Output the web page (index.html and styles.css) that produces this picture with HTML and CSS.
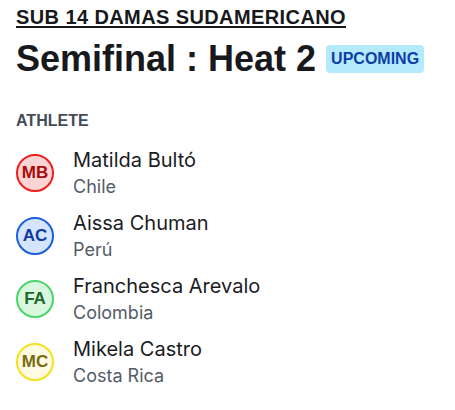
FILE: index.html
```html
<!DOCTYPE html>
<html lang="es">
<head>
<meta charset="utf-8">
<title>Semifinal : Heat 2</title>
<link rel="stylesheet" href="styles.css">
</head>
<body>
<main class="heat">
  <header class="heat-header">
    <a class="event" href="#">SUB 14 DAMAS SUDAMERICANO</a>
    <div class="title-row">
      <h1 class="title">Semifinal : Heat 2</h1>
      <span class="badge">UPCOMING</span>
    </div>
  </header>
  <section class="athletes">
    <h2 class="col-label">ATHLETE</h2>
    <ul class="list">
      <li class="athlete">
        <span class="avatar red">MB</span>
        <div class="info"><div class="name">Matilda Bultó</div><div class="country">Chile</div></div>
      </li>
      <li class="athlete">
        <span class="avatar blue">AC</span>
        <div class="info"><div class="name">Aissa Chuman</div><div class="country">Perú</div></div>
      </li>
      <li class="athlete">
        <span class="avatar green">FA</span>
        <div class="info"><div class="name">Franchesca Arevalo</div><div class="country">Colombia</div></div>
      </li>
      <li class="athlete">
        <span class="avatar yellow">MC</span>
        <div class="info"><div class="name">Mikela Castro</div><div class="country">Costa Rica</div></div>
      </li>
    </ul>
  </section>
</main>
</body>
</html>
```
FILE: styles.css
```css
* { box-sizing: border-box; }
html, body { margin: 0; padding: 0; background: #fff; }
body { font-family: "Liberation Sans", Arial, sans-serif; color: #18191c; }
.heat { padding: 6px 16px 0; }
.heat-header { display: flex; flex-direction: column; }
.event {
  font-size: 20px; font-weight: 700; color: #18191c; letter-spacing: 0.02em;
  text-decoration: underline; text-underline-offset: 2px; text-decoration-thickness: 2px;
  line-height: 23px; align-self: flex-start;
}
.title-row { display: flex; align-items: center; gap: 10px; margin-top: 10px; }
.title { margin: 0; font-size: 36px; font-weight: 700; line-height: 40px; color: #18191c; }
.badge {
  background: #b5eafd; color: #0b3fa5; font-weight: 700; font-size: 16px;
  padding: 5px 5px; border-radius: 4px; line-height: 18px;
}
.athletes { margin-top: 33px; }
.col-label { margin: 0; font-size: 16px; font-weight: 700; color: #454b57; line-height: 18px; }
.list { list-style: none; margin: 16px 0 0; padding: 0; display: flex; flex-direction: column; gap: 9px; }
.athlete { display: flex; align-items: center; gap: 19px; }
.avatar {
  width: 38px; height: 38px; border-radius: 50%; border: 2px solid; display: flex;
  align-items: center; justify-content: center; font-weight: 700; font-size: 17px; flex: none;
}
.red { background: #fdd4d4; border-color: #f01d1d; color: #a80b0b; }
.blue { background: #d5e4ff; border-color: #1a5ee0; color: #0d3a9e; }
.green { background: #d8f7de; border-color: #4cd46a; color: #1a6a2c; }
.yellow { background: #fffbe2; border-color: #f3e21a; color: #7a6a12; }
.info { font-family: Inter, "Noto Sans", sans-serif; }
.name { font-size: 20px; line-height: 28px; color: #1b1c1f; }
.country { font-size: 18px; line-height: 26px; color: #545b68; }
```
